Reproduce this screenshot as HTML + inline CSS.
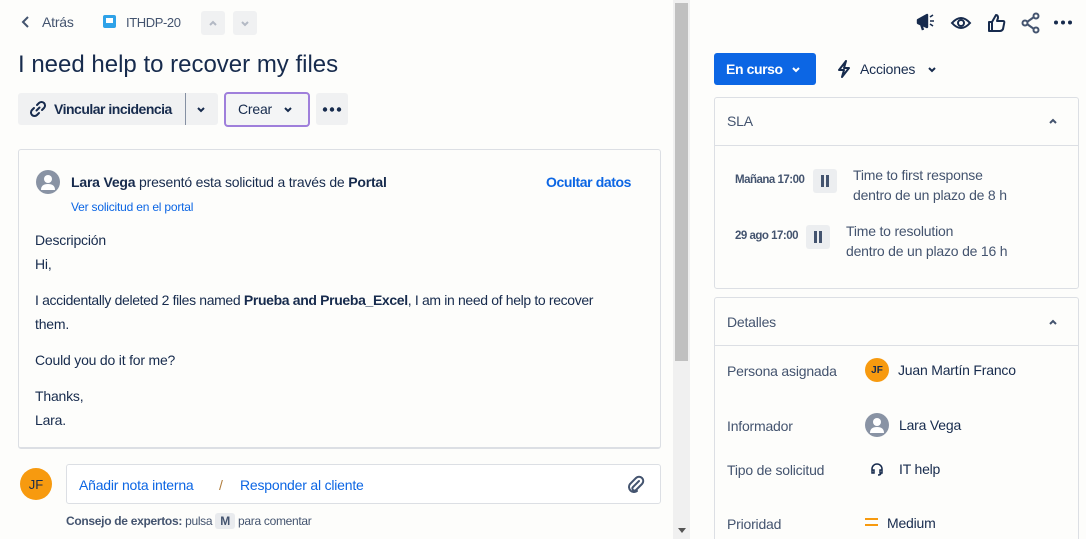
<!DOCTYPE html>
<html><head><meta charset="utf-8"><style>
*{box-sizing:border-box;margin:0;padding:0}
html,body{width:1086px;height:539px;overflow:hidden}
body{background:#fdfdfb;font-family:"Liberation Sans",sans-serif;color:#172b4d;position:relative;font-size:14px;letter-spacing:-0.2px}
.a{position:absolute;white-space:nowrap}
.t{margin-top:-1px}
.btn{position:absolute;background:#f0f1f2;border-radius:3px}
.box{position:absolute;border:1px solid #dcdfe4;border-radius:3px}
.lbl{color:#44546f;font-size:14px}
.av{position:absolute;border-radius:50%;background:#f79a0f;color:#172b4d;font-size:11px;font-weight:bold;display:flex;align-items:center;justify-content:center;letter-spacing:0}
</style></head><body>
<svg class="a" style="left:20px;top:15px" width="12" height="14" viewBox="0 0 12 14"><path d="M8 2 L3 7 L8 12" stroke="#44546f" stroke-width="2" fill="none"/></svg>
<div class="a" style="left:42px;top:14px;color:#44546f">Atrás</div>
<div class="a" style="left:103px;top:15px;width:13px;height:13px;background:#2fa2e8;border-radius:2px"></div>
<div class="a" style="left:106px;top:18px;width:7px;height:5px;background:#fff"></div>
<div class="a" style="left:126px;top:15px;color:#44546f;font-size:13px;letter-spacing:-0.4px">ITHDP-20</div>
<div class="btn" style="left:201px;top:11px;width:24px;height:24px"></div>
<svg class="a" style="left:207px;top:17px" width="12" height="12"><path d="M3 8 L6 5 L9 8" stroke="#b3b9c4" stroke-width="2" fill="none"/></svg>
<div class="btn" style="left:233px;top:11px;width:24px;height:24px"></div>
<svg class="a" style="left:239px;top:17px" width="12" height="12"><path d="M3 5 L6 8 L9 5" stroke="#b3b9c4" stroke-width="2" fill="none"/></svg>
<div class="a" style="left:18px;top:51px;font-size:24px;color:#172b4d;letter-spacing:0">I need help to recover my files</div>
<div class="btn" style="left:18px;top:93px;width:200px;height:32px"></div>
<div class="a" style="left:185px;top:93px;width:1px;height:32px;background:#8590a2"></div>
<svg class="a" style="left:28px;top:99px" width="20" height="20" viewBox="0 0 20 20"><path d="M8.5 11.5 L11.5 8.5 M9 6 L11 4 A3 3 0 0 1 16 9 L14 11 M11 14 L9 16 A3 3 0 0 1 4 11 L6 9" stroke="#172b4d" stroke-width="2" fill="none" stroke-linecap="round"/></svg>
<div class="a" style="left:54px;top:101px;font-weight:bold;color:#172b4d;font-size:14px;letter-spacing:-0.5px">Vincular incidencia</div>
<svg class="a" style="left:195px;top:103px" width="12" height="12"><path d="M3 5 L6 8 L9 5" stroke="#172b4d" stroke-width="2" fill="none"/></svg>
<div class="a" style="left:224px;top:92px;width:86px;height:35px;border:2px solid #9f7fdb;border-radius:4px;background:#f4f5f6"></div>
<div class="a" style="left:238px;top:101px;color:#172b4d">Crear</div>
<svg class="a" style="left:282px;top:103px" width="12" height="12"><path d="M3 5 L6 8 L9 5" stroke="#172b4d" stroke-width="2" fill="none"/></svg>
<div class="btn" style="left:316px;top:93px;width:32px;height:32px"></div>
<svg class="a" style="left:322px;top:107px" width="20" height="5"><circle cx="3" cy="2.5" r="2.2" fill="#172b4d"/><circle cx="10" cy="2.5" r="2.2" fill="#172b4d"/><circle cx="17" cy="2.5" r="2.2" fill="#172b4d"/></svg>
<div class="box" style="left:18px;top:149px;width:643px;height:300px;border-bottom:2px solid #dcdfe4"></div>
<svg class="a" style="left:36px;top:170px" width="24" height="24" viewBox="0 0 24 24"><circle cx="12" cy="12" r="12" fill="#8993a4"/><circle cx="12" cy="9" r="4" fill="#fff"/><path d="M5 20 Q5 14 12 14 Q19 14 19 20Z" fill="#fff"/></svg>
<div class="a" style="left:71px;top:174px;font-size:14px"><b>Lara Vega</b> presentó esta solicitud a través de <b>Portal</b></div>
<div class="a" style="left:71px;top:200px;font-size:12px;color:#0c66e4">Ver solicitud en el portal</div>
<div class="a" style="left:546px;top:174px;font-weight:bold;color:#0c66e4;letter-spacing:-0.4px">Ocultar datos</div>
<div class="a" style="left:35px;top:232px">Descripción</div>
<div class="a" style="left:35px;top:256px">Hi,</div>
<div class="a" style="left:35px;top:292px;letter-spacing:-0.35px">I accidentally deleted 2 files named <b>Prueba and Prueba_Excel</b>, I am in need of help to recover</div>
<div class="a" style="left:35px;top:316px">them.</div>
<div class="a" style="left:35px;top:352px">Could you do it for me?</div>
<div class="a" style="left:35px;top:388px">Thanks,</div>
<div class="a" style="left:35px;top:412px">Lara.</div>
<div class="av" style="left:20px;top:468px;width:32px;height:32px;font-size:13px;font-weight:normal">JF</div>
<div class="box" style="left:66px;top:464px;width:595px;height:40px;background:#fff"></div>
<div class="a" style="left:79px;top:477px;color:#0c66e4">Añadir nota interna</div>
<div class="a" style="left:219px;top:477px;color:#b07c3c">/</div>
<div class="a" style="left:240px;top:477px;color:#0c66e4">Responder al cliente</div>
<svg class="a" style="left:625px;top:474px" width="20" height="20" viewBox="0 0 20 20"><path d="M14 7 L8 13 A2 2 0 0 0 11 16 L17 10 A4 4 0 0 0 11 4 L5 10 A5 5 0 0 0 12 17" stroke="#44546f" stroke-width="2" fill="none" stroke-linecap="round"/></svg>
<div class="a" style="left:66px;top:514px;font-size:12px;color:#44546f;letter-spacing:-0.3px"><b>Consejo de expertos:</b> pulsa <span style="background:#e9ebee;padding:1px 5px;border-radius:3px;font-weight:bold">M</span> para comentar</div>
<div class="a" style="left:673px;top:0;width:17px;height:539px;background:#f0f0f0"></div>
<div class="a" style="left:675px;top:3px;width:13px;height:358px;background:#c0c0c0"></div>
<div class="a" style="left:678px;top:528px;width:0;height:0;border-left:4px solid transparent;border-right:4px solid transparent;border-top:5px solid #555"></div>
<svg class="a" style="left:916px;top:12px" width="22" height="20" viewBox="0 0 22 20"><path d="M2 8 L11 3 L11 15 L2 11Z M5 12 L7 18" stroke="#172b4d" stroke-width="2.4" fill="#172b4d" stroke-linejoin="round"/><path d="M14 5 L17 3 M14 9 L18 9 M14 12 L17 14" stroke="#172b4d" stroke-width="1.6"/></svg>
<svg class="a" style="left:950px;top:12px" width="22" height="22" viewBox="0 0 22 22"><path d="M2 11 Q11 1 20 11 Q11 21 2 11Z" stroke="#172b4d" stroke-width="2" fill="none"/><circle cx="11" cy="11" r="3" stroke="#172b4d" stroke-width="2" fill="none"/></svg>
<svg class="a" style="left:987px;top:12px" width="20" height="22" viewBox="0 0 20 22"><path d="M2 10 H5 V19 H2Z M5 10 L9 3 Q11 3 11 6 L10 9 H16 Q18 9 17 12 L16 17 Q15 19 13 19 H5" stroke="#172b4d" stroke-width="2" fill="none" stroke-linejoin="round"/></svg>
<svg class="a" style="left:1021px;top:12px" width="20" height="22" viewBox="0 0 20 22"><circle cx="15" cy="4" r="2.5" stroke="#44546f" stroke-width="2" fill="none"/><circle cx="4" cy="11" r="2.5" stroke="#44546f" stroke-width="2" fill="none"/><circle cx="15" cy="18" r="2.5" stroke="#44546f" stroke-width="2" fill="none"/><path d="M6 10 L13 5 M6 12 L13 17" stroke="#44546f" stroke-width="2"/></svg>
<svg class="a" style="left:1053px;top:20px" width="20" height="5"><circle cx="3" cy="2.5" r="2" fill="#172b4d"/><circle cx="10" cy="2.5" r="2" fill="#172b4d"/><circle cx="17" cy="2.5" r="2" fill="#172b4d"/></svg>
<div class="a" style="left:714px;top:53px;width:102px;height:32px;background:#0c66e4;border-radius:3px"></div>
<div class="a" style="left:726px;top:61px;color:#fff;font-weight:bold;letter-spacing:-0.4px">En curso</div>
<svg class="a" style="left:790px;top:64px" width="12" height="12"><path d="M3 4 L6 7 L9 4" stroke="#fff" stroke-width="2" fill="none"/></svg>
<svg class="a" style="left:836px;top:60px" width="16" height="18" viewBox="0 0 16 18"><path d="M10 1 L3 10 H8 L6 17 L13 8 H8Z" stroke="#172b4d" stroke-width="2" fill="none" stroke-linejoin="round"/></svg>
<div class="a" style="left:860px;top:61px;color:#172b4d">Acciones</div>
<svg class="a" style="left:926px;top:64px" width="12" height="12"><path d="M3 4 L6 7 L9 4" stroke="#172b4d" stroke-width="2" fill="none"/></svg>
<div class="box" style="left:714px;top:97px;width:365px;height:192px"></div>
<div class="a" style="left:714px;top:145px;width:365px;height:1px;background:#dcdfe4"></div>
<div class="a lbl" style="left:727px;top:113px">SLA</div>
<svg class="a" style="left:1047px;top:115px" width="12" height="12"><path d="M3 8 L6 5 L9 8" stroke="#44546f" stroke-width="2" fill="none"/></svg>
<div class="a" style="left:735px;top:174px;font-size:11.5px;font-weight:bold;color:#44546f;letter-spacing:-0.5px">Mañana 17:00</div>
<div class="a" style="left:813px;top:169px;width:24px;height:24px;background:#eceef0;border-radius:3px"></div>
<div class="a" style="left:821px;top:175px;width:3px;height:12px;background:#44546f"></div><div class="a" style="left:826px;top:175px;width:3px;height:12px;background:#44546f"></div>
<div class="a" style="left:853px;top:167px;color:#44546f">Time to first response</div>
<div class="a" style="left:853px;top:187px;color:#44546f">dentro de un plazo de 8 h</div>
<div class="a" style="left:735px;top:230px;font-size:11.5px;font-weight:bold;color:#44546f;letter-spacing:-0.5px">29 ago 17:00</div>
<div class="a" style="left:806px;top:225px;width:24px;height:24px;background:#eceef0;border-radius:3px"></div>
<div class="a" style="left:814px;top:231px;width:3px;height:12px;background:#44546f"></div><div class="a" style="left:819px;top:231px;width:3px;height:12px;background:#44546f"></div>
<div class="a" style="left:846px;top:223px;color:#44546f">Time to resolution</div>
<div class="a" style="left:846px;top:243px;color:#44546f">dentro de un plazo de 16 h</div>
<div class="box" style="left:714px;top:297px;width:365px;height:260px"></div>
<div class="a" style="left:714px;top:345px;width:365px;height:1px;background:#dcdfe4"></div>
<div class="a lbl" style="left:727px;top:314px">Detalles</div>
<svg class="a" style="left:1047px;top:316px" width="12" height="12"><path d="M3 8 L6 5 L9 8" stroke="#44546f" stroke-width="2" fill="none"/></svg>
<div class="a lbl" style="left:727px;top:363px">Persona asignada</div>
<div class="av" style="left:865px;top:358px;width:24px;height:24px;font-size:10px">JF</div>
<div class="a" style="left:898px;top:362px">Juan Martín Franco</div>
<div class="a lbl" style="left:727px;top:418px">Informador</div>
<svg class="a" style="left:865px;top:413px" width="24" height="24" viewBox="0 0 24 24"><circle cx="12" cy="12" r="12" fill="#8993a4"/><circle cx="12" cy="9" r="4" fill="#fff"/><path d="M5 20 Q5 14 12 14 Q19 14 19 20Z" fill="#fff"/></svg>
<div class="a" style="left:899px;top:417px">Lara Vega</div>
<div class="a lbl" style="left:727px;top:462px">Tipo de solicitud</div>
<svg class="a" style="left:870px;top:462px" width="14" height="14" viewBox="0 0 14 14"><path d="M2 9 V7 A5 5 0 0 1 12 7 V9 M2 8 H4 V11 H2Z M10 8 H12 V11 H10Z M11 11 Q11 13 8 13" stroke="#172b4d" stroke-width="1.5" fill="none"/></svg>
<div class="a" style="left:899px;top:461px">IT help</div>
<div class="a lbl" style="left:727px;top:516px">Prioridad</div>
<div class="a" style="left:865px;top:518px;width:13px;height:2px;background:#f79a0f"></div>
<div class="a" style="left:865px;top:524px;width:13px;height:2px;background:#f79a0f"></div>
<div class="a" style="left:887px;top:515px">Medium</div>
</body></html>
